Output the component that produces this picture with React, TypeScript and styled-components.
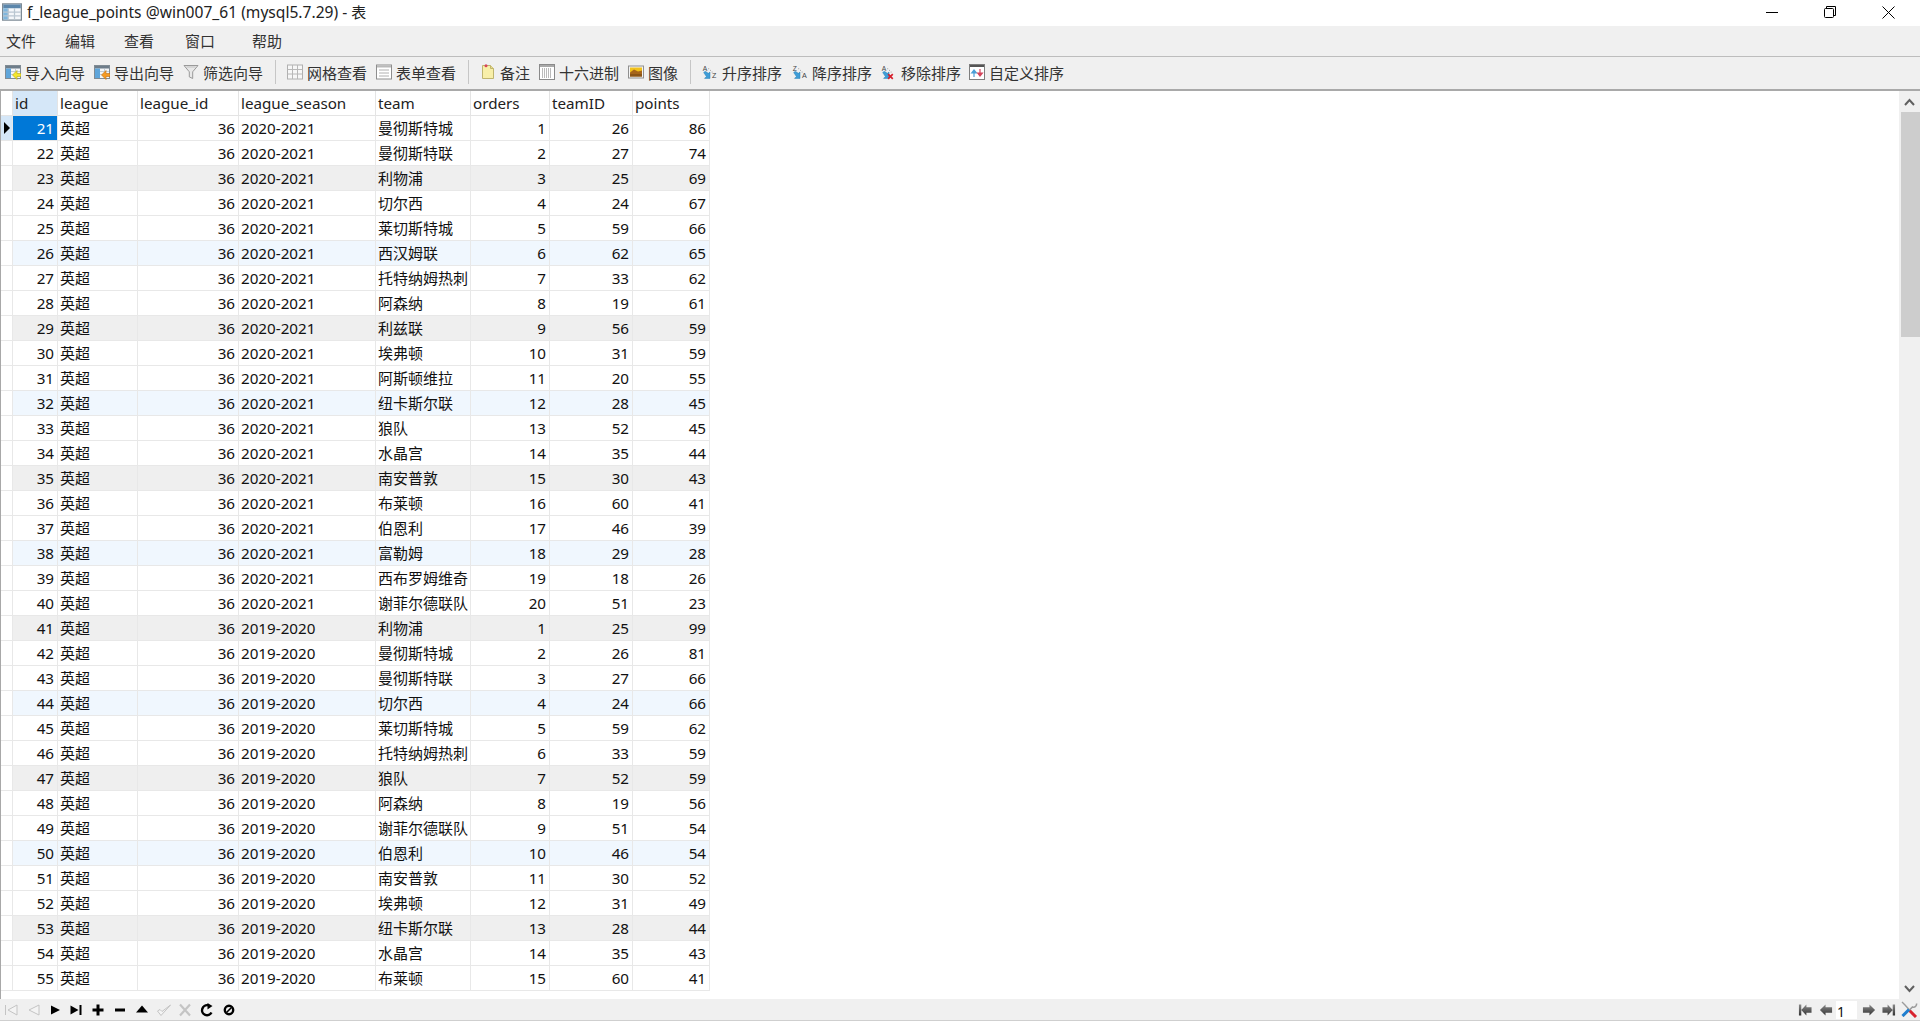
import React from 'react';
import styled, { createGlobalStyle } from 'styled-components';

const GlobalStyle = createGlobalStyle`
	html, body {
		margin: 0;
		padding: 0;
		background: #fff;
		overflow: hidden;
	}
	#root {
		height: 1023px;
	}
	* {
		box-sizing: border-box;
	}
`;

const FONT = `"Noto Sans", "Noto Sans CJK SC", sans-serif`;
const CJK_FONT = `"Noto Sans CJK SC", "Noto Sans", sans-serif`;

const Page = styled.div`
	display: flex;
	flex-direction: column;
	height: 1023px;
	width: 1920px;
	overflow: hidden;
	font-family: ${FONT};
	color: #111;
`;

const TitleBar = styled.div`
	display: flex;
	align-items: flex-start;
	height: 26px;
	flex: none;
	padding: 2px 3px 0 2px;
	background: #fff;
`;

const TitleText = styled.div`
	margin-left: 5px;
	margin-top: -1px;
	font-size: 15.6px;
	line-height: 22px;
	color: #222;
	flex: 1;
`;

const TitleCjk = styled.span`
	font-family: ${CJK_FONT};
	font-size: 15px;
`;

const WindowButton = styled.div`
	width: 58px;
	height: 20px;
	display: flex;
	align-items: center;
	justify-content: center;
`;

const MenuBar = styled.div`
	display: flex;
	align-items: center;
	height: 31px;
	flex: none;
	padding-left: 6px;
	background: #f0f0f0;
	border-bottom: 1px solid #bdbdbd;
`;

const MenuItem = styled.div<{ $offset: number }>`
	margin-left: ${(p) => p.$offset}px;
	width: 30px;
	font-family: ${CJK_FONT};
	font-size: 15px;
	line-height: 20px;
	color: #333;
	white-space: nowrap;
`;

const ToolBar = styled.div`
	display: flex;
	align-items: center;
	height: 34px;
	flex: none;
	padding: 0 0 2px 5px;
	background: #f0f0f0;
	border-bottom: 2px solid #a9a9a9;
`;

const ToolButton = styled.div<{ $width: number }>`
	display: flex;
	align-items: center;
	gap: 4px;
	width: ${(p) => p.$width}px;
	flex: none;
	font-family: ${CJK_FONT};
	font-size: 15px;
	color: #333;
	white-space: nowrap;
`;

const IconSlot = styled.span`
	display: flex;
	width: 16px;
	height: 16px;
	flex: none;
	overflow: visible;
`;

const ToolSeparator = styled.div<{ $after: number }>`
	width: 1px;
	height: 24px;
	flex: none;
	margin-right: ${(p) => p.$after}px;
	background: #c6c6c6;
`;

const GridArea = styled.div`
	display: flex;
	flex: 1;
	min-height: 0;
`;

const TablePane = styled.div`
	flex: 1;
	border-left: 1px solid #a8a8a8;
	overflow: hidden;
	background: #fff;
`;

const DataTable = styled.table`
	table-layout: fixed;
	width: 709px;
	border-collapse: separate;
	border-spacing: 0;
	font-size: 15.2px;
`;

const HeadCell = styled.th<{ $active?: boolean }>`
	height: 25px;
	padding: 0 3px 1px 2px;
	text-align: left;
	font-weight: 400;
	color: #222;
	background: ${(p) => (p.$active ? '#d5e7f8' : '#fff')};
	border-right: 1px solid #e4e4e4;
	border-bottom: 1px solid #e4e4e4;
	overflow: hidden;
	white-space: nowrap;
`;

const Row = styled.tr<{ $tone: 'plain' | 'grey' | 'blue' }>`
	background: ${(p) =>
		p.$tone === 'grey' ? '#efefef' : p.$tone === 'blue' ? '#f0f7fe' : '#fff'};
`;

const GutterCell = styled.td<{ $current?: boolean }>`
	height: 25px;
	padding: 0 0 0 3px;
	background: ${(p) => (p.$current ? '#d5e7f8' : '#fff')};
	border-right: 1px solid #e8e8e8;
	border-bottom: 1px solid #e8e8e8;
`;

const RowMarker = styled.span`
	display: block;
	width: 0;
	height: 0;
	border-top: 6px solid transparent;
	border-bottom: 6px solid transparent;
	border-left: 6px solid #000;
`;

const Cell = styled.td<{ $number?: boolean; $cjk?: boolean; $selected?: boolean }>`
	height: 25px;
	padding: 0 3px 1px 2px;
	text-align: ${(p) => (p.$number ? 'right' : 'left')};
	font-family: ${(p) => (p.$cjk ? CJK_FONT : FONT)};
	font-size: ${(p) => (p.$cjk ? 15 : 15.2)}px;
	line-height: 20px;
	color: ${(p) => (p.$selected ? '#fff' : '#111')};
	background: ${(p) => (p.$selected ? '#0078d7' : 'transparent')};
	border-right: 1px solid #e8e8e8;
	border-bottom: 1px solid #e8e8e8;
	overflow: hidden;
	white-space: nowrap;
`;

const ScrollBar = styled.div`
	display: flex;
	flex-direction: column;
	align-items: center;
	width: 21px;
	flex: none;
	background: #f0f0f0;
`;

const ScrollArrow = styled.div`
	display: flex;
	align-items: center;
	justify-content: center;
	height: 21px;
	width: 100%;
	flex: none;
`;

const ScrollTrack = styled.div`
	flex: 1;
	width: 100%;
`;

const ScrollThumb = styled.div`
	width: 19px;
	height: 225px;
	margin-left: 1px;
	background: #cdcdcd;
`;

const StatusBar = styled.div`
	display: flex;
	align-items: center;
	height: 22px;
	flex: none;
	padding-left: 3px;
	background: #f0f0f0;
	border-bottom: 1px solid #cfcfcf;
`;

const NavGroup = styled.div`
	display: flex;
	align-items: center;
	gap: 5.8px;
	flex: 1;
`;

const PagerGroup = styled.div`
	display: flex;
	align-items: center;
	padding-right: 2px;
`;

const PagerSlot = styled.span<{ $left: number }>`
	display: flex;
	margin-left: ${(p) => p.$left}px;
`;

const PageInput = styled.div`
	width: 21px;
	height: 18px;
	margin-left: 3px;
	padding-left: 1px;
	background: #fff;
	font-size: 14px;
	line-height: 22px;
	color: #111;
`;

const BottomGap = styled.div`
	height: 2px;
	flex: none;
	background: #fff;
`;

type RowData = [number, string, string, number, number, number];

const rows: RowData[] = [
	[21, '2020-2021', '曼彻斯特城', 1, 26, 86],
	[22, '2020-2021', '曼彻斯特联', 2, 27, 74],
	[23, '2020-2021', '利物浦', 3, 25, 69],
	[24, '2020-2021', '切尔西', 4, 24, 67],
	[25, '2020-2021', '莱切斯特城', 5, 59, 66],
	[26, '2020-2021', '西汉姆联', 6, 62, 65],
	[27, '2020-2021', '托特纳姆热刺', 7, 33, 62],
	[28, '2020-2021', '阿森纳', 8, 19, 61],
	[29, '2020-2021', '利兹联', 9, 56, 59],
	[30, '2020-2021', '埃弗顿', 10, 31, 59],
	[31, '2020-2021', '阿斯顿维拉', 11, 20, 55],
	[32, '2020-2021', '纽卡斯尔联', 12, 28, 45],
	[33, '2020-2021', '狼队', 13, 52, 45],
	[34, '2020-2021', '水晶宫', 14, 35, 44],
	[35, '2020-2021', '南安普敦', 15, 30, 43],
	[36, '2020-2021', '布莱顿', 16, 60, 41],
	[37, '2020-2021', '伯恩利', 17, 46, 39],
	[38, '2020-2021', '富勒姆', 18, 29, 28],
	[39, '2020-2021', '西布罗姆维奇', 19, 18, 26],
	[40, '2020-2021', '谢菲尔德联队', 20, 51, 23],
	[41, '2019-2020', '利物浦', 1, 25, 99],
	[42, '2019-2020', '曼彻斯特城', 2, 26, 81],
	[43, '2019-2020', '曼彻斯特联', 3, 27, 66],
	[44, '2019-2020', '切尔西', 4, 24, 66],
	[45, '2019-2020', '莱切斯特城', 5, 59, 62],
	[46, '2019-2020', '托特纳姆热刺', 6, 33, 59],
	[47, '2019-2020', '狼队', 7, 52, 59],
	[48, '2019-2020', '阿森纳', 8, 19, 56],
	[49, '2019-2020', '谢菲尔德联队', 9, 51, 54],
	[50, '2019-2020', '伯恩利', 10, 46, 54],
	[51, '2019-2020', '南安普敦', 11, 30, 52],
	[52, '2019-2020', '埃弗顿', 12, 31, 49],
	[53, '2019-2020', '纽卡斯尔联', 13, 28, 44],
	[54, '2019-2020', '水晶宫', 14, 35, 43],
	[55, '2019-2020', '布莱顿', 15, 60, 41],
];

const columns = [
	{ name: 'id', width: 45 },
	{ name: 'league', width: 80 },
	{ name: 'league_id', width: 101 },
	{ name: 'league_season', width: 137 },
	{ name: 'team', width: 95 },
	{ name: 'orders', width: 79 },
	{ name: 'teamID', width: 83 },
	{ name: 'points', width: 77 },
];

const TableIcon: React.FC<{ size?: number }> = ({ size = 16 }) => (
	<svg width={size} height={size} viewBox="0 0 16 16">
		<rect x="0.5" y="1.5" width="15" height="13" fill="#f4f7fa" stroke="#7d8a95" />
		<rect x="1" y="2" width="14" height="3" fill="#5b86ab" />
		<rect x="1" y="5" width="4" height="9" fill="#7fb6dd" />
		<path d="M5 5v9M10 5v9M1 8h14M1 11h14" stroke="#b9c6d1" fill="none" />
	</svg>
);

const ImportIcon: React.FC<{ color: string; edge: string }> = ({ color, edge }) => (
	<svg width="16" height="16" viewBox="0 0 16 16">
		<rect x="0.5" y="1.5" width="15" height="13" fill="#f4f6f8" stroke="#808b94" />
		<rect x="1" y="2" width="14" height="2.5" fill="#6e7d8a" />
		<rect x="1" y="4.5" width="5" height="9.5" fill="#5fa5da" />
		<path d="M6 7.5h9M6 10.5h3M10.5 5v4" stroke="#c2ccd4" fill="none" />
		<path d="M16 9.5v3h-4v3l-4.5-4.5 4.5-4.5v3z" fill={color} stroke={edge} strokeWidth="0.6" />
	</svg>
);

const FilterIcon = () => (
	<svg width="16" height="16" viewBox="0 0 16 16">
		<path d="M1 1.5h14l-5.3 6.3v6.7l-3.4-1.6v-5.1z" fill="#e8e8e8" stroke="#9a9a9a" />
		<path d="M3.5 3h9" stroke="#c3c3c3" />
	</svg>
);

const GridIcon = () => (
	<svg width="16" height="16" viewBox="0 0 16 16">
		<rect x="0.5" y="1" width="15" height="14" fill="#f7f7f7" stroke="#b0b0b0" />
		<path d="M5.5 1v14M10.5 1v14M.5 5.5h15M.5 10h15" stroke="#b8b8b8" fill="none" />
	</svg>
);

const FormIcon = () => (
	<svg width="16" height="16" viewBox="0 0 16 16">
		<rect x="0.5" y="1" width="15" height="14" fill="#fff" stroke="#8e8e8e" />
		<rect x="1" y="1.5" width="14" height="2" fill="#b9b9b9" />
		<path d="M3 6h10M3 9h10M3 12h10" stroke="#b0b0b0" />
	</svg>
);

const NoteIcon = () => (
	<svg width="16" height="16" viewBox="0 0 16 16">
		<path d="M2.5 1.5h8l3 3v10h-11z" fill="#f8efa8" stroke="#bfb56e" />
		<path d="M10.5 1.5v3h3" fill="#e9dc8a" stroke="#bfb56e" />
		<circle cx="6" cy="1.8" r="1.5" fill="#d8455a" />
	</svg>
);

const HexIcon = () => (
	<svg width="16" height="16" viewBox="0 0 16 16">
		<rect x="0.5" y="0.5" width="15" height="15" fill="#fff" stroke="#8a8a8a" />
		<rect x="1" y="1" width="14" height="2" fill="#a9a9a9" />
		<path d="M3 5h10M3 7h10M3 9h10M3 11h10M3 13h10" stroke="#777" strokeDasharray="1 1" />
	</svg>
);

const ImageIcon = () => (
	<svg width="16" height="16" viewBox="0 0 16 16">
		<rect x="0.5" y="2" width="15" height="12" fill="#f4f4f4" stroke="#8f8f8f" />
		<rect x="2" y="3.5" width="12" height="5" fill="#f2c21a" />
		<path d="M2 8.5l4-3 4 2 4-1v6H2z" fill="#a6651a" />
		<rect x="2" y="10" width="12" height="2.5" fill="#8a5416" />
	</svg>
);

const SortIcon: React.FC<{ top: string; bottom?: string; cross?: boolean }> = ({
	top,
	bottom,
	cross,
}) => (
	<svg width="19" height="17" viewBox="0 0 19 17">
		<text x="1" y="7" fontSize="8" fontFamily="Liberation Sans" fill="#444">
			{top}
		</text>
		{bottom && (
			<text x="12" y="15.5" fontSize="8.5" fontFamily="Liberation Sans" fill="#444">
				{bottom}
			</text>
		)}
		<path d="M7.5 4h1M9.5 6h1M11.5 8h1" stroke="#888" />
		<path d="M2 8.5l2-1.5 3.5 2.5L9.5 8v7.5H3l2.2-2.2z" fill="#3f9ed8" stroke="#2a7fb5" strokeWidth="0.6" />
		{cross && <path d="M8.5 10.5l5.5 5.5M14 10.5L8.5 16" stroke="#d6202c" strokeWidth="2" />}
	</svg>
);

const CustomSortIcon = () => (
	<svg width="16" height="16" viewBox="0 0 16 16">
		<rect x="0.5" y="0.5" width="15" height="15" fill="#fff" stroke="#7e7e7e" />
		<rect x="1" y="1" width="14" height="2" fill="#555" />
		<path d="M5 13V7M2.6 9L5 6l2.4 3z" fill="#4c9fd6" stroke="#4c9fd6" strokeWidth="1.2" />
		<path d="M11 5v6M8.6 9l2.4 3 2.4-3z" fill="#d4455c" stroke="#d4455c" strokeWidth="1.2" />
	</svg>
);

const navPaths: Record<string, React.ReactNode> = {
	first: <path d="M2.5 3v10M14 3v10L5 8z" fill="#f4f4f4" stroke="#c4c4c4" />,
	prev: <path d="M14 3v10L4 8z" fill="#f4f4f4" stroke="#c4c4c4" />,
	next: <path d="M4 3.5v9L13 8z" fill="#000" />,
	last: <path d="M2.5 3.5v9L10.5 8zM11.5 3h2v10h-2z" fill="#000" />,
	plus: <path d="M6.5 2.5h3v4h4v3h-4v4h-3v-4h-4v-3h4z" fill="#000" />,
	minus: <path d="M3 6.5h10v3H3z" fill="#000" />,
	up: <path d="M8 3.5L14 10.5H2z" fill="#000" />,
	check: <path d="M1.5 9l3.5 4.5L14.5 3 6 9.5 4 7.5z" fill="#f4f4f4" stroke="#c4c4c4" />,
	cross: (
		<path
			d="M3 2.5l10 11M13 2.5l-10 11"
			stroke="#c4c4c4"
			strokeWidth="2.2"
			fill="none"
		/>
	),
	reload: (
		<>
			<path d="M12.5 10.5A5 5 0 1 1 9 3.3" stroke="#000" strokeWidth="2.4" fill="none" />
			<path d="M8.5 1l5 3-5 3.5z" fill="#000" />
		</>
	),
	stop: (
		<>
			<circle cx="8" cy="8" r="4.2" stroke="#000" strokeWidth="2.4" fill="none" />
			<path d="M5.5 10.5l5-5" stroke="#000" strokeWidth="1.6" />
		</>
	),
};

const NavIcon: React.FC<{ name: string }> = ({ name }) => (
	<svg width="16" height="16" viewBox="0 0 16 16">
		{navPaths[name]}
	</svg>
);

const PagerIcon: React.FC<{ d: string; id: string }> = ({ d, id }) => (
	<svg width="14" height="14" viewBox="0 0 15 14">
		<defs>
			<linearGradient id={id} x1="0" y1="0" x2="0" y2="1">
				<stop offset="0" stopColor="#8a8a8a" />
				<stop offset="1" stopColor="#333" />
			</linearGradient>
		</defs>
		<path d={d} fill={`url(#${id})`} />
	</svg>
);

const ToolsIcon = () => (
	<svg width="17" height="17" viewBox="0 0 17 17">
		<path d="M1 1l3 3 9 10" stroke="#9c9c9c" strokeWidth="1.4" fill="none" />
		<path d="M8 9l7 7" stroke="#d8232e" strokeWidth="3" />
		<path d="M15.5 2.5a3 3 0 0 1-4 3.5L2 15.5" stroke="#9c9c9c" strokeWidth="1.6" fill="none" />
		<path d="M8 8.5L1.5 15" stroke="#1f7fd0" strokeWidth="3" />
	</svg>
);

const menus = [
	{ label: '文件', offset: 0 },
	{ label: '编辑', offset: 29 },
	{ label: '查看', offset: 29 },
	{ label: '窗口', offset: 31 },
	{ label: '帮助', offset: 37 },
];

const toneFor = (index: number): 'plain' | 'grey' | 'blue' => {
	if (index % 6 === 2) return 'grey';
	if (index % 6 === 5) return 'blue';
	return 'plain';
};

export default function App() {
	return (
		<Page>
			<GlobalStyle />
			<TitleBar>
				<TableIcon size={20} />
				<TitleText>
					f_league_points @win007_61 (mysql5.7.29) - <TitleCjk>表</TitleCjk>
				</TitleText>
				<WindowButton>
					<svg width="12" height="12" viewBox="0 0 12 12">
						<path d="M0 6.5h12" stroke="#000" />
					</svg>
				</WindowButton>
				<WindowButton>
					<svg width="12" height="12" viewBox="0 0 12 12">
						<path d="M2.5 2.5V.5h9v9h-2" stroke="#000" fill="none" />
						<rect x="0.5" y="2.5" width="9" height="9" rx="1" stroke="#000" fill="#fff" />
					</svg>
				</WindowButton>
				<WindowButton>
					<svg width="13" height="13" viewBox="0 0 13 13">
						<path d="M.5.5l12 12M12.5.5l-12 12" stroke="#000" />
					</svg>
				</WindowButton>
			</TitleBar>

			<MenuBar>
				{menus.map((m) => (
					<MenuItem key={m.label} $offset={m.offset}>
						{m.label}
					</MenuItem>
				))}
			</MenuBar>

			<ToolBar>
				<ToolButton $width={89}>
					<IconSlot>
						<ImportIcon color="#f3e62e" edge="#b2a51a" />
					</IconSlot>
					导入向导
				</ToolButton>
				<ToolButton $width={89}>
					<IconSlot>
						<ImportIcon color="#f59a23" edge="#c06f12" />
					</IconSlot>
					导出向导
				</ToolButton>
				<ToolButton $width={92}>
					<IconSlot>
						<FilterIcon />
					</IconSlot>
					筛选向导
				</ToolButton>
				<ToolSeparator $after={11} />
				<ToolButton $width={89}>
					<IconSlot>
						<GridIcon />
					</IconSlot>
					网格查看
				</ToolButton>
				<ToolButton $width={92}>
					<IconSlot>
						<FormIcon />
					</IconSlot>
					表单查看
				</ToolButton>
				<ToolSeparator $after={11} />
				<ToolButton $width={59}>
					<IconSlot>
						<NoteIcon />
					</IconSlot>
					备注
				</ToolButton>
				<ToolButton $width={89}>
					<IconSlot>
						<HexIcon />
					</IconSlot>
					十六进制
				</ToolButton>
				<ToolButton $width={62}>
					<IconSlot>
						<ImageIcon />
					</IconSlot>
					图像
				</ToolButton>
				<ToolSeparator $after={11} />
				<ToolButton $width={90}>
					<IconSlot>
						<SortIcon top="A" bottom="Z" />
					</IconSlot>
					升序排序
				</ToolButton>
				<ToolButton $width={89}>
					<IconSlot>
						<SortIcon top="Z" bottom="A" />
					</IconSlot>
					降序排序
				</ToolButton>
				<ToolButton $width={88}>
					<IconSlot>
						<SortIcon top="A" cross />
					</IconSlot>
					移除排序
				</ToolButton>
				<ToolButton $width={100}>
					<IconSlot>
						<CustomSortIcon />
					</IconSlot>
					自定义排序
				</ToolButton>
			</ToolBar>

			<GridArea>
				<TablePane>
					<DataTable>
						<colgroup>
							<col width={12} />
							{columns.map((c) => (
								<col key={c.name} width={c.width} />
							))}
						</colgroup>
						<thead>
							<tr>
								<HeadCell />
								{columns.map((c) => (
									<HeadCell key={c.name} $active={c.name === 'id'}>
										{c.name}
									</HeadCell>
								))}
							</tr>
						</thead>
						<tbody>
							{rows.map((r, i) => (
								<Row key={r[0]} $tone={toneFor(i)}>
									<GutterCell $current={i === 0}>{i === 0 && <RowMarker />}</GutterCell>
									<Cell $number $selected={i === 0}>
										{r[0]}
									</Cell>
									<Cell $cjk>英超</Cell>
									<Cell $number>36</Cell>
									<Cell>{r[1]}</Cell>
									<Cell $cjk>{r[2]}</Cell>
									<Cell $number>{r[3]}</Cell>
									<Cell $number>{r[4]}</Cell>
									<Cell $number>{r[5]}</Cell>
								</Row>
							))}
						</tbody>
					</DataTable>
				</TablePane>
				<ScrollBar>
					<ScrollArrow>
						<svg width="11" height="8" viewBox="0 0 11 8">
							<path d="M1 7l4.5-5L10 7" stroke="#606060" strokeWidth="2" fill="none" />
						</svg>
					</ScrollArrow>
					<ScrollThumb />
					<ScrollTrack />
					<ScrollArrow>
						<svg width="11" height="8" viewBox="0 0 11 8">
							<path d="M1 1l4.5 5L10 1" stroke="#606060" strokeWidth="2" fill="none" />
						</svg>
					</ScrollArrow>
				</ScrollBar>
			</GridArea>

			<StatusBar>
				<NavGroup>
					{Object.keys(navPaths).map((name) => (
						<NavIcon key={name} name={name} />
					))}
				</NavGroup>
				<PagerGroup>
					<PagerSlot $left={0}>
						<PagerIcon id="pg-first" d="M1 1h2.5v12H1zM3.5 7L9 1v3h5.5v6H9v3z" />
					</PagerSlot>
					<PagerSlot $left={7}>
						<PagerIcon id="pg-prev" d="M1 7l6-6v3h7v6H7v3z" />
					</PagerSlot>
					<PageInput>1</PageInput>
					<PagerSlot $left={5}>
						<PagerIcon id="pg-next" d="M14 7L8 1v3H1v6h7v3z" />
					</PagerSlot>
					<PagerSlot $left={6}>
						<PagerIcon id="pg-last" d="M14 1h-2.5v12H14zM11.5 7L6 1v3H.5v6H6v3z" />
					</PagerSlot>
					<PagerSlot $left={5}>
						<ToolsIcon />
					</PagerSlot>
				</PagerGroup>
			</StatusBar>
			<BottomGap />
		</Page>
	);
}
